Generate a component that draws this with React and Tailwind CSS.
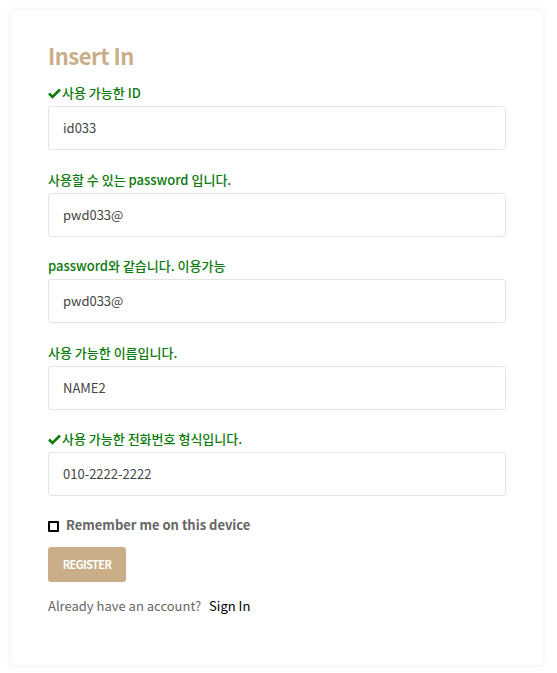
import React from 'react';

const fields = [
    { label: '사용 가능한 ID', check: true, value: 'id033' },
    { label: '사용할 수 있는 password 입니다.', check: false, value: 'pwd033@' },
    { label: 'password와 같습니다. 이용가능', check: false, value: 'pwd033@' },
    { label: '사용 가능한 이름입니다.', check: false, value: 'NAME2' },
    { label: '사용 가능한 전화번호 형식입니다.', check: true, value: '010-2222-2222' },
];

const App = () => {
    return (
        <div
            className="min-h-screen bg-white px-[11px] pt-[10px]"
            style={{ fontFamily: '"Noto Sans CJK KR", "Noto Sans", sans-serif' }}
        >
            <div className="w-[532px] h-[655px] bg-white shadow-[0_0_6px_rgba(0,0,0,0.08)] pl-[37px] pr-[37px] pt-[30px]">
                {/* 제목 */}
                <h2 className="text-[22px] font-bold text-[#c9ae88] leading-[30px] tracking-[-0.5px]">Insert In</h2>

                {/* 입력 필드 */}
                <div className="mt-[13px] flex flex-col gap-[19.5px]">
                    {fields.map((f, i) => (
                        <div key={i}>
                            <div className="flex items-center h-[20px] text-[13px] text-[#0b7a0b] font-medium leading-[20px]">
                                {f.check && (
                                    <svg width="13" height="11" viewBox="0 0 13 11" className="mr-[1px]">
                                        <path d="M1 5.5 L4.5 9 L12 1.5" stroke="#0b7a0b" strokeWidth="2.6" fill="none" />
                                    </svg>
                                )}
                                <span>{f.label}</span>
                            </div>
                            <div className="mt-[3px] h-[44px] border border-[#e4e4e4] rounded-[3px] flex items-center px-[14px] text-[13px] text-[#444]">
                                {f.value}
                            </div>
                        </div>
                    ))}
                </div>

                {/* 기억하기 */}
                <div className="mt-[19px] flex items-center">
                    <span className="w-[11px] h-[11px] border-2 border-black rounded-[1px] mt-[2px]"></span>
                    <span className="ml-[7px] text-[13px] font-bold text-[#666] leading-[20px]">Remember me on this device</span>
                </div>

                <button className="mt-[12px] w-[78px] h-[35px] rounded-[3px] bg-[#c9ae88] text-white text-[11px] font-bold tracking-[-0.6px]">
                    REGISTER
                </button>

                <div className="mt-[14px] text-[13px] text-[#666] leading-[20px]">
                    Already have an account?
                    <span className="ml-[8px] text-black">Sign In</span>
                </div>
            </div>
        </div>
    );
};

export default App;
